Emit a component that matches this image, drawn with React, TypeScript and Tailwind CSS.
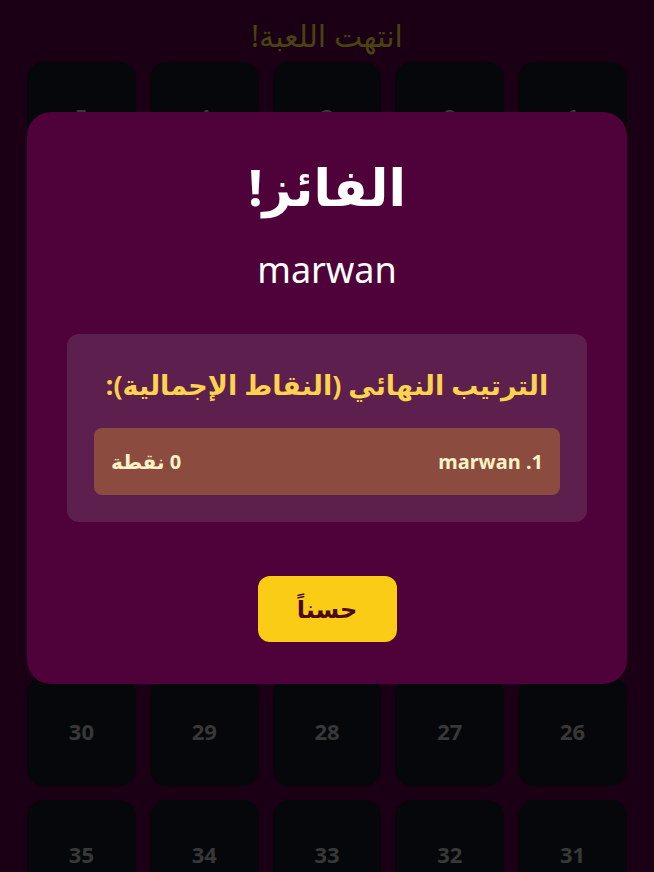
const TILES = Array.from({ length: 35 }, (_, i) => i + 1);

const FONT = "font-['Noto_Sans','DejaVu_Sans',sans-serif]";

function Tile({ n }: { n: number }) {
  return (
    <div className="flex h-[109px] items-center justify-center rounded-2xl bg-[#06070a]">
      <span className="text-[22px] font-bold text-[#383838]">{n}</span>
    </div>
  );
}

function WinnerModal() {
  return (
    <div className="fixed inset-0 flex items-start justify-center px-[27px] pt-[112px]">
      <div className="flex w-full flex-col items-center rounded-3xl bg-[#4e0239] px-10 pb-[42px] pt-[39px]">
        <h2 className="text-[51px] font-bold leading-[1.4] text-white">الفائز!</h2>
        <p className="mt-[30px] text-4xl leading-none text-white">marwan</p>

        <div className="mt-[46px] w-full rounded-xl bg-[#5d1f4d] px-[27px] pb-[27px] pt-[32px]">
          <h3 className="text-center text-[27px] font-bold leading-[1.4] text-[#fcd34d]">
            الترتيب النهائي (النقاط الإجمالية):
          </h3>
          <div className="mt-[24px] flex h-[67px] items-center justify-between rounded-lg bg-[#8b4b3f] px-[17px] text-[20px] font-bold text-[#fef3c7]">
            <span>1. marwan</span>
            <span>0 نقطة</span>
          </div>
        </div>

        <button className="mt-[54px] h-[66px] w-[139px] rounded-xl bg-[#facc15] text-2xl font-bold text-[#4a0a18]">
          حسناً
        </button>
      </div>
    </div>
  );
}

export default function App() {
  return (
    <div dir="rtl" className={`${FONT} min-h-[872px] overflow-hidden bg-[#1b0015] px-[27px] pt-[18px]`}>
      <h1 className="mb-[8px] text-center text-[30px] leading-[36px] text-[#4a4210]">انتهت اللعبة!</h1>
      <div className="grid grid-cols-5 gap-[14px]">
        {TILES.map((n) => (
          <Tile key={n} n={n} />
        ))}
      </div>
      <WinnerModal />
    </div>
  );
}
